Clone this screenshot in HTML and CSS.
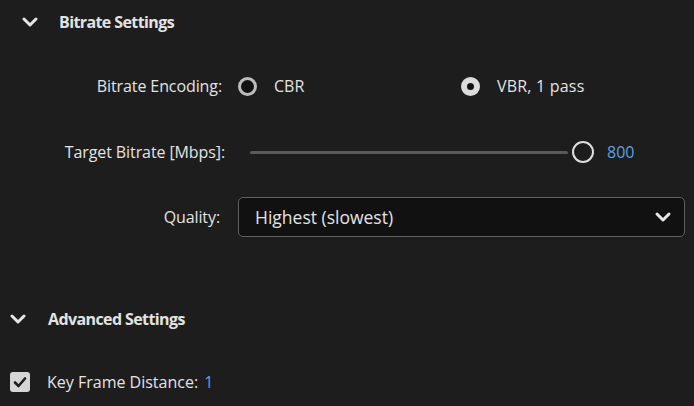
FILE: index.html
```html
<!DOCTYPE html>
<html>
<head>
<meta charset="utf-8">
<link rel="stylesheet" href="styles.css">
</head>
<body>
<div class="panel">
  <div class="section-head head1">
    <svg class="chev" width="16" height="10" viewBox="0 0 16 10"><path d="M2 2 L8 8 L14 2" fill="none" stroke="#e6e6e6" stroke-width="3" stroke-linecap="round" stroke-linejoin="round"/></svg>
    <span class="head-title">Bitrate Settings</span>
  </div>

  <div class="row row-enc">
    <div class="label lbl-enc">Bitrate Encoding:</div>
    <div class="radio-group">
      <div class="radio-item item-cbr"><span class="radio"></span><span class="radio-text">CBR</span></div>
      <div class="radio-item"><span class="radio checked"></span><span class="radio-text">VBR, 1 pass</span></div>
    </div>
  </div>

  <div class="row row-target">
    <div class="label lbl-target">Target Bitrate [Mbps]:</div>
    <div class="slider">
      <div class="track"></div>
      <div class="thumb"></div>
    </div>
    <span class="value">800</span>
  </div>

  <div class="row row-quality">
    <div class="label lbl-quality">Quality:</div>
    <div class="dropdown">
      <span class="dd-text">Highest (slowest)</span>
      <svg class="dd-chev" width="18" height="12" viewBox="0 0 18 12"><path d="M3 3 L9 9 L15 3" fill="none" stroke="#e6e6e6" stroke-width="3" stroke-linecap="round" stroke-linejoin="round"/></svg>
    </div>
  </div>

  <div class="section-head head2">
    <svg class="chev" width="16" height="10" viewBox="0 0 16 10"><path d="M2 2 L8 8 L14 2" fill="none" stroke="#e6e6e6" stroke-width="3" stroke-linecap="round" stroke-linejoin="round"/></svg>
    <span class="head-title">Advanced Settings</span>
  </div>

  <div class="row row-key">
    <span class="checkbox">
      <svg width="14" height="12" viewBox="0 0 14 12"><path d="M2 6.5 L5.5 10 L12 2.5" fill="none" stroke="#1d1d1d" stroke-width="2.6" stroke-linecap="round" stroke-linejoin="round"/></svg>
    </span>
    <span class="key-text">Key Frame Distance:</span>
    <span class="value key-val">1</span>
  </div>
</div>
</body>
</html>
```

FILE: styles.css
```css
html, body {
  margin: 0;
  padding: 0;
  background: #1d1d1d;
}
body {
  width: 694px;
  height: 406px;
  overflow: hidden;
  font-family: "Open Sans", "Liberation Sans", sans-serif;
  color: #e3e3e3;
  font-size: 16px;
}
.panel {
  display: flex;
  flex-direction: column;
}
.section-head {
  display: flex;
  align-items: center;
  height: 24px;
}
.head1 {
  margin-top: 10px;
  padding-left: 22px;
}
.head1 .head-title { margin-left: 21px; }
.head2 {
  margin-top: 70px;
  padding-left: 10px;
}
.head2 .head-title { margin-left: 22px; }
.head-title {
  font-weight: 700;
  font-size: 16px;
  letter-spacing: -0.6px;
}
.chev { display: block; }

.row {
  display: flex;
  align-items: center;
}
.label {
  text-align: right;
  letter-spacing: -0.1px;
}
.row-enc {
  margin-top: 40px;
  height: 24px;
}
.lbl-enc { width: 222px; }
.radio-group {
  display: flex;
  margin-left: 16px;
}
.radio-item {
  display: flex;
  align-items: center;
}
.item-cbr { width: 223px; }
.radio {
  width: 19px;
  height: 19px;
  box-sizing: border-box;
  border-radius: 50%;
  border: 3px solid #bdbdbd;
  background: #121212;
}
.radio.checked {
  border: 6.5px solid #dcdcdc;
  background: #121212;
}
.radio-text { margin-left: 17px; }
.radio-item:last-child .radio-text { letter-spacing: 0.2px; }

.row-target {
  margin-top: 42px;
  height: 24px;
}
.lbl-target { width: 225px; }
.slider {
  position: relative;
  margin-left: 25px;
  width: 345px;
  height: 24px;
  display: flex;
  align-items: center;
}
.track {
  width: 318px;
  height: 3px;
  background: #5a5a5a;
  border-radius: 2px;
}
.thumb {
  position: absolute;
  left: 322px;
  top: 1px;
  width: 22px;
  height: 22px;
  box-sizing: border-box;
  border-radius: 50%;
  border: 2.5px solid #dedede;
  background: #1d1d1d;
}
.value {
  color: #5aa2e6;
  margin-left: 12px;
}

.row-quality {
  margin-top: 33px;
  height: 40px;
}
.lbl-quality { width: 220px; }
.dropdown {
  margin-left: 18px;
  width: 447px;
  height: 40px;
  box-sizing: border-box;
  border: 1.5px solid #606060;
  border-radius: 5px;
  background: #111111;
  display: flex;
  align-items: center;
  justify-content: space-between;
  padding: 0 12px 0 16px;
  font-size: 17.5px;
}

.row-key {
  margin-top: 39px;
  padding-left: 10px;
  height: 24px;
}
.checkbox {
  width: 20px;
  height: 20px;
  border-radius: 3px;
  background: #d6d6d6;
  display: flex;
  align-items: center;
  justify-content: center;
}
.key-text {
  margin-left: 17px;
}
.key-val { margin-left: 6px; }
```
